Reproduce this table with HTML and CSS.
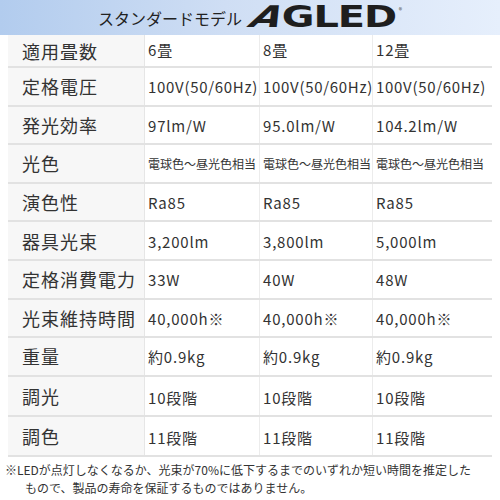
FILE: index.html
```html
<!DOCTYPE html>
<html lang="ja">
<head>
<meta charset="utf-8">
<link rel="stylesheet" href="styles.css">
</head>
<body>
<header class="banner">
  <span class="banner-title">スタンダードモデル</span>
  <span class="logo"><span class="logo-inner"><span class="logo-a">A</span>GLED</span><span class="reg">®</span></span>
</header>
<div class="spec">
  <div class="row first"><div class="label">適用畳数</div><div class="val">6畳</div><div class="val">8畳</div><div class="val">12畳</div></div>
  <div class="row"><div class="label">定格電圧</div><div class="val tight">100V(50/60Hz)</div><div class="val tight">100V(50/60Hz)</div><div class="val tight">100V(50/60Hz)</div></div>
  <div class="row"><div class="label">発光効率</div><div class="val">97lm/W</div><div class="val">95.0lm/W</div><div class="val">104.2lm/W</div></div>
  <div class="row"><div class="label">光色</div><div class="val small">電球色～昼光色相当</div><div class="val small">電球色～昼光色相当</div><div class="val small">電球色～昼光色相当</div></div>
  <div class="row"><div class="label">演色性</div><div class="val">Ra85</div><div class="val">Ra85</div><div class="val">Ra85</div></div>
  <div class="row"><div class="label">器具光束</div><div class="val">3,200lm</div><div class="val">3,800lm</div><div class="val">5,000lm</div></div>
  <div class="row"><div class="label">定格消費電力</div><div class="val">33W</div><div class="val">40W</div><div class="val">48W</div></div>
  <div class="row"><div class="label">光束維持時間</div><div class="val">40,000h※</div><div class="val">40,000h※</div><div class="val">40,000h※</div></div>
  <div class="row"><div class="label">重量</div><div class="val">約0.9kg</div><div class="val">約0.9kg</div><div class="val">約0.9kg</div></div>
  <div class="row tall"><div class="label">調光</div><div class="val">10段階</div><div class="val">10段階</div><div class="val">10段階</div></div>
  <div class="row tall"><div class="label">調色</div><div class="val">11段階</div><div class="val">11段階</div><div class="val">11段階</div></div>
</div>
<p class="note">※LEDが点灯しなくなるか、光束が70%に低下するまでのいずれか短い時間を推定した<br>もので、製品の寿命を保証するものではありません。</p>
</body>
</html>
```
FILE: styles.css
```css
* { box-sizing: border-box; }
body {
  margin: 0;
  background: #fff;
  font-family: "Noto Sans CJK JP", "Noto Sans", sans-serif;
  color: #333;
}
.banner {
  height: 35px;
  background: linear-gradient(90deg, #b2ccee 0%, #cfdef4 45%, #e6effc 100%);
  display: flex;
  align-items: center;
  justify-content: center;
  gap: 10px;
}
.banner-title {
  font-size: 16px;
  color: #222;
  line-height: 1;
  margin-top: 1px;
}
.logo {
  position: relative;
  display: inline-block;
  width: 150px;
  height: 24px;
}
.logo-inner {
  position: absolute;
  left: 0;
  top: -7px;
  font-family: "DejaVu Sans", sans-serif;
  font-weight: bold;
  font-size: 30px;
  line-height: 1.2;
  color: #1e1e1e;
  transform: scaleX(1.33);
  transform-origin: left center;
  white-space: nowrap;
  letter-spacing: -0.8px;
}
.logo-a {
  display: inline-block;
  transform: skewX(-24deg);
}
.reg {
  position: absolute;
  right: 0;
  top: 1px;
  font-size: 7px;
  line-height: 1;
  color: #444;
}
.spec {
  margin: 0 8px;
}
.row {
  display: grid;
  grid-template-columns: 137px 115px 113px 119px;
  height: 38.6px;
  border-bottom: 2px solid #e2e2e2;
}
.row.first { height: 33px; }
.row.tall { height: 40px; }
.label {
  background: #f7f7f7;
  padding-left: 14px;
  font-size: 18px;
  display: flex;
  align-items: center;
  letter-spacing: 1px;
  color: #333;
  border-right: 1px solid #e6e6e6;
}
.val {
  display: flex;
  align-items: center;
  padding-left: 3px;
  font-size: 15px;
  letter-spacing: 0.8px;
  color: #333;
  border-right: 1px solid #ececec;
  white-space: nowrap;
  padding-top: 1px;
}
.row.first .val { padding-top: 0; padding-bottom: 3px; }
.row.tall .val { padding-top: 4px; }
.val:last-child { border-right: none; }
.val.tight { letter-spacing: 0.7px; }
.val.small { font-size: 12px; letter-spacing: 0; }
.note {
  margin: 4px 0 0;
  padding: 0 0 0 25px;
  text-indent: -20px;
  font-size: 12px;
  line-height: 18px;
  color: #333;
  white-space: nowrap;
}
```
